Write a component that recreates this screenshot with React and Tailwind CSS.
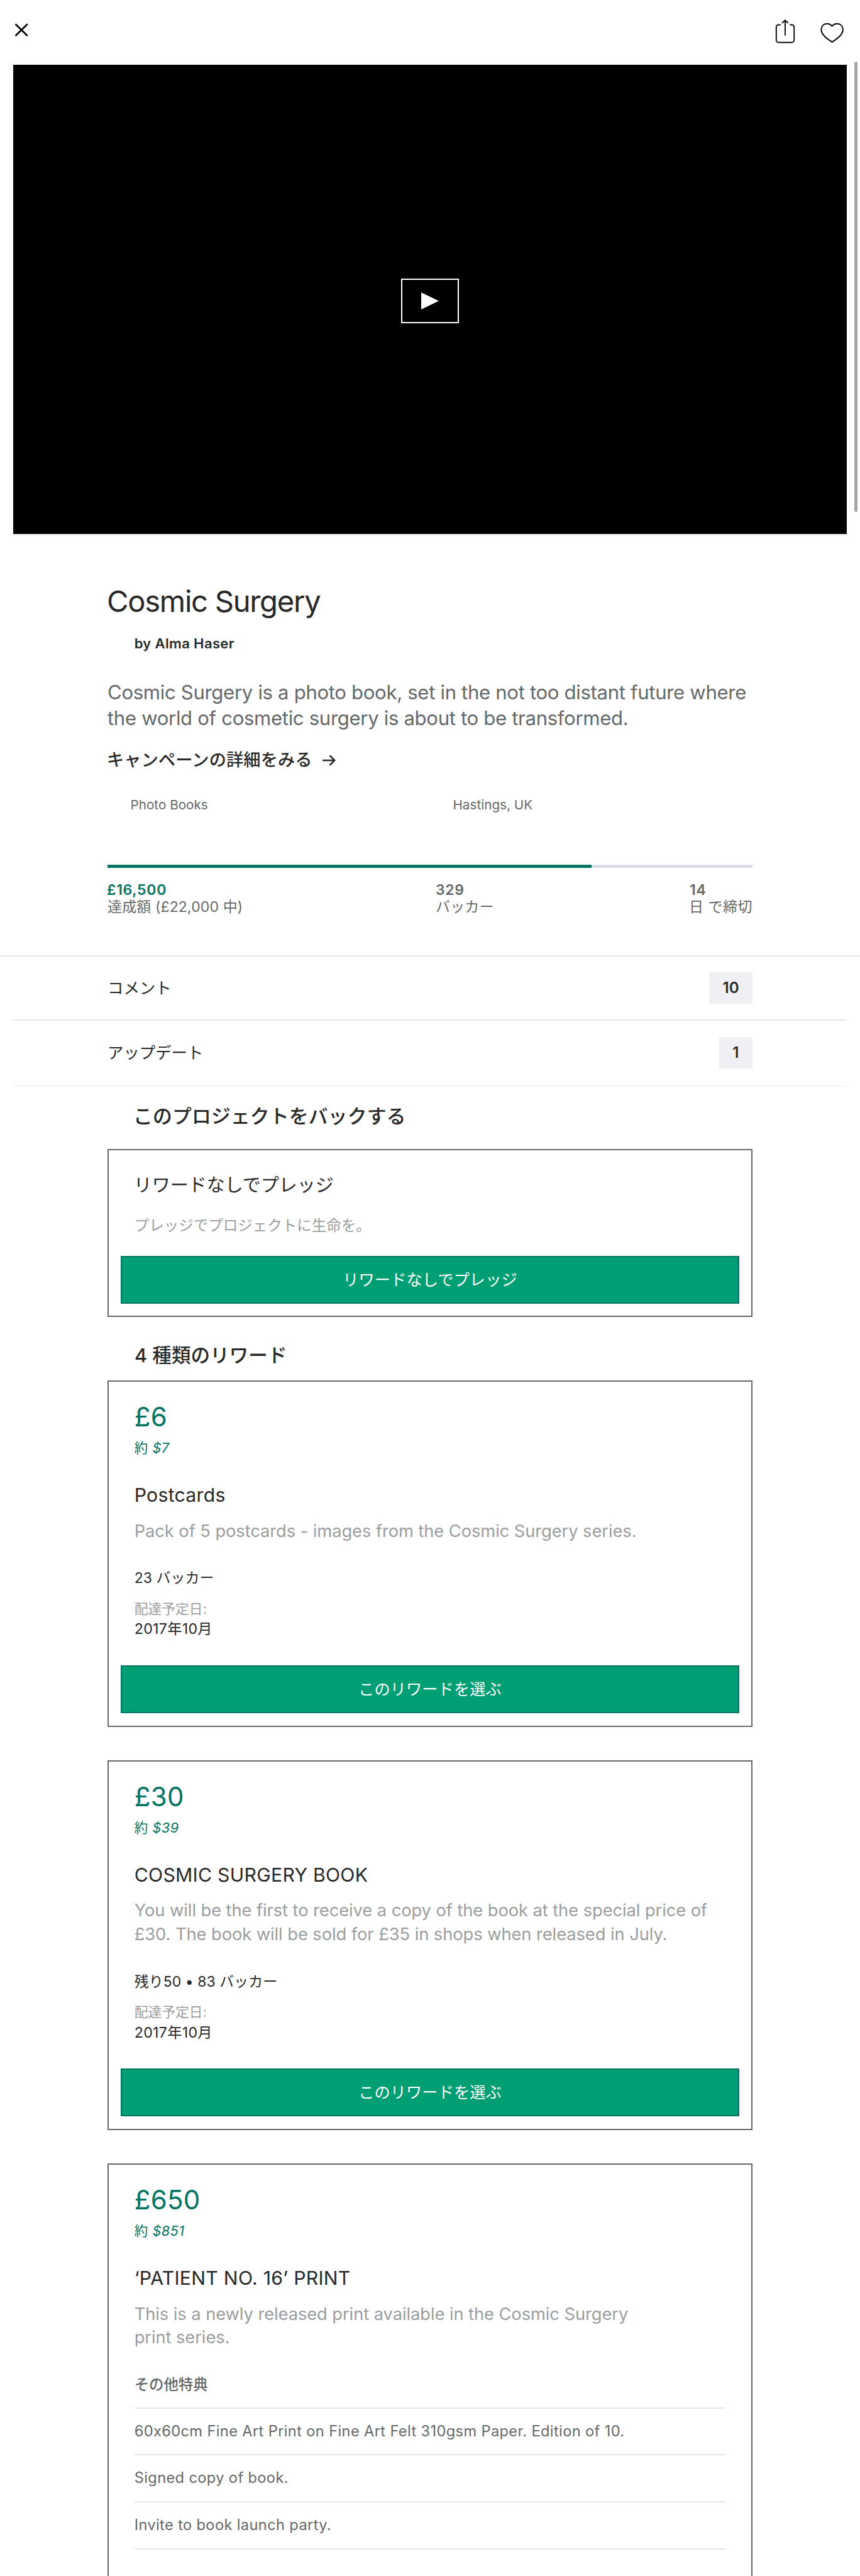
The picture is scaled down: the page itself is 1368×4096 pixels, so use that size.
const rewards = [
  {
    price: "£6",
    approx: "$7",
    title: "Postcards",
    body: ["Pack of 5 postcards - images from the Cosmic Surgery series."],
    backers: "23 バッカー",
    date: "2017年10月",
  },
  {
    price: "£30",
    approx: "$39",
    title: "COSMIC SURGERY BOOK",
    body: [
      "You will be the first to receive a copy of the book at the special price of",
      "£30. The book will be sold for £35 in shops when released in July.",
    ],
    backers: "残り50 • 83 バッカー",
    date: "2017年10月",
  },
  {
    price: "£650",
    approx: "$851",
    title: "‘PATIENT NO. 16’ PRINT",
    body: ["This is a newly released print available in the Cosmic Surgery", "print series."],
    perks: [
      "60x60cm Fine Art Print on Fine Art Felt 310gsm Paper. Edition of 10.",
      "Signed copy of book.",
      "Invite to book launch party.",
    ],
  },
];

function Header() {
  return (
    <header className="flex h-[103px] items-start justify-between pt-[31px] pr-[25px] pl-[23px]">
      <svg className="h-[39.2px] w-[23.2px]" viewBox="0 0 26 44" fill="none" stroke="#000" strokeWidth="3" strokeLinecap="round">
        <path d="M2.6 9l19.8 19.4M22.4 9L2.6 28.4" />
      </svg>
      <div className="flex gap-[39px]">
        <svg className="h-[39.2px] w-[32px]" viewBox="0 0 36 44" fill="none" stroke="#000" strokeWidth="2.1" strokeLinecap="round">
          <path d="M9 9.5H6a4 4 0 0 0-4 4V37a4 4 0 0 0 4 4h24a4 4 0 0 0 4-4V13.5a4 4 0 0 0-4-4h-3" />
          <path d="M17.9 28V2M13 5.8l4.9-4.4 4.9 4.4" />
        </svg>
        <svg className="h-[39.2px] w-[39.2px]" viewBox="0 0 44 44" fill="none" stroke="#000" strokeWidth="2.3" strokeLinejoin="round">
          <path d="M22 11.8C18.8 8.2 14.8 7.2 12 7.6 6.5 8.2 2.7 12.3 2.7 18.2 2.7 27 12 34 22 40.2 32 34 41.4 27 41.4 18.2 41.4 12.3 37.5 8.2 32 7.6 29.2 7.2 25.2 8.2 22 11.8Z" />
        </svg>
      </div>
    </header>
  );
}

function Video() {
  return (
    <div className="mx-[21.3px] flex h-[748px] items-center justify-center border-b-2 border-[#e6e6e6] bg-black pt-[4px]">
      <div className="flex h-[71px] w-[92px] items-center justify-center border-2 border-white">
        <svg className="h-[27px] w-[28px]" viewBox="0 0 28 27" fill="#fff">
          <path d="M0 0l28 13.5L0 27z" />
        </svg>
      </div>
    </div>
  );
}

function Summary() {
  return (
    <section className="mx-[171px] pt-[74.7px]">
      <h1 className="-ml-px text-[47.2px] leading-[60px] tracking-[-1.28px]">Cosmic Surgery</h1>
      <p className="mt-[22.5px] ml-[42.7px] text-[22px] leading-[30px] font-semibold tracking-[0.36px]">by Alma Haser</p>
      <p className="mt-[43.3px] text-[31.1px] leading-[41px] tracking-[-0.32px] whitespace-nowrap text-[#656969]">
        Cosmic Surgery is a photo book, set in the not too distant future where
        <br />
        the world of cosmetic surgery is about to be transformed.
      </p>
      <div className="mt-[25.1px] flex h-10 items-center text-[27.2px] leading-10 font-medium">
        <span className="-ml-px tracking-[0.15px]">キャンペーンの詳細をみる</span>
        <svg className="ml-[16px] h-[18px] w-[21px]" viewBox="0 0 21 18" fill="none" stroke="#282828" strokeWidth="2.6">
          <path d="M0 9h19M11.5 1.2L19.2 9l-7.7 7.8" />
        </svg>
      </div>
      <div className="mt-[36.1px] flex text-[20.7px] leading-[30px] text-[#656969]">
        <span className="w-[512px] pl-[36.5px]">Photo Books</span>
        <span className="pl-[37.5px]">Hastings, UK</span>
      </div>
      <div className="mt-[80.3px] h-[5.5px] bg-[#dadde6]">
        <div className="h-full w-3/4 bg-[#037362]" />
      </div>
      <dl className="mt-[21.6px] flex text-[23px] leading-[27px] tracking-[0.13px] text-[#656969]">
        <div className="w-[522px]">
          <dt className="-ml-px font-semibold tracking-[0.7px] text-[#037362]">£16,500</dt>
          <dd>達成額 (£22,000 中)</dd>
        </div>
        <div className="flex-1">
          <dt className="font-semibold tracking-[0.7px]">329</dt>
          <dd>バッカー</dd>
        </div>
        <div>
          <dt className="-ml-px font-semibold tracking-[0.7px]">14</dt>
          <dd className="-ml-0.5 tracking-[0.5px]">日 で締切</dd>
        </div>
      </dl>
    </section>
  );
}

function CountRow({ label, count }) {
  return (
    <div className="flex h-full items-center justify-between pr-[149.7px] pl-[149.7px]">
      <span className="text-[25.4px] leading-10">{label}</span>
      <span className="flex h-[50px] items-center bg-[#efeff4] px-[21.5px] text-[24px] leading-none font-semibold">{count}</span>
    </div>
  );
}

function GreenButton({ children }) {
  return (
    <button className="mx-[19px] flex h-[76.5px] items-center justify-center border-2 border-[#037362] bg-[#009e74] text-[25.3px] leading-none text-white">
      {children}
    </button>
  );
}

function Reward({ item }) {
  const open = Boolean(item.perks);
  return (
    <article className={open ? "flex h-[700px] flex-col border-2 border-b-0 border-[#656969] pt-[31px]" : "flex flex-col border-2 border-[#656969] pt-[31px] pb-[19.4px]"}>
      <div className="px-[40.7px]">
        <p className="text-[42px] leading-[50px] tracking-[0.3px] text-[#037362]">{item.price}</p>
        <p className="mt-[9px] text-[21.5px] leading-[30px] tracking-[0.6px] text-[#037362]">
          約 <i className="font-[450]">{item.approx}</i>
        </p>
        <h3 className="mt-10 text-[30.2px] leading-10 tracking-[0.28px]">{item.title}</h3>
        <div className="mt-[18.5px] text-[27.3px] leading-[37.4px] tracking-[-0.07px] whitespace-nowrap text-[#9b9e9e]">
          {item.body.map((line) => (
            <p key={line}>{line}</p>
          ))}
        </div>
        {open ? (
          <>
            <p className="mt-[41.5px] text-[23.4px] leading-[30px] font-medium text-[#656969]">その他特典</p>
            <ul className="mt-[20.6px] border-b-2 border-[#e6e6e6] text-[23.6px] text-[#656969]">
              {item.perks.map((perk) => (
                <li key={perk} className="h-[74.8px] border-t-2 border-[#e6e6e6] leading-[72.8px] tracking-[0.38px] whitespace-nowrap">
                  {perk}
                </li>
              ))}
            </ul>
          </>
        ) : (
          <>
            <p className="mt-[41.3px] text-[22.9px] leading-[30px] tracking-[0.1px]">{item.backers}</p>
            <p className="mt-[18.7px] text-[21.7px] leading-[30px] tracking-[0.1px] text-[#9b9e9e]">配達予定日:</p>
            <p className="mt-[2.4px] mb-[42.2px] text-[23.2px] leading-[30px] tracking-[0.3px]">{item.date}</p>
          </>
        )}
      </div>
      {!open && <GreenButton>このリワードを選ぶ</GreenButton>}
    </article>
  );
}

export default function App() {
  return (
    <div className="relative h-[4096px] w-[1368px] overflow-hidden bg-white font-['Inter','Noto_Sans_CJK_JP',sans-serif] text-[#282828] [font-feature-settings:'calt'_0]">
      <Header />
      <Video />
      <Summary />

      <section className="mt-[63.3px] border-t-2 border-[#e6e6e6]">
        <div className="mx-[21.3px] h-[101.5px] border-b-2 border-[#e6e6e6]">
          <CountRow label="コメント" count={10} />
        </div>
        <div className="mx-[21.3px] h-[105px] border-b-2 border-[#f5f5f5]">
          <CountRow label="アップデート" count={1} />
        </div>
      </section>

      <main className="mx-[171px] pt-[27px]">
        <h2 className="ml-[41px] text-[30.8px] leading-10 font-medium tracking-[0.18px]">このプロジェクトをバックする</h2>
        <article className="mt-[31.7px] flex flex-col border-2 border-[#656969] pt-[36.7px] pb-[19.2px]">
          <div className="px-[40.7px]">
            <h3 className="-ml-px text-[29px] leading-10">リワードなしでプレッジ</h3>
            <p className="mt-[29.2px] mb-[32.2px] text-[23.5px] leading-[30px] text-[#9b9e9e]">プレッジでプロジェクトに生命を。</p>
          </div>
          <GreenButton>リワードなしでプレッジ</GreenButton>
        </article>
        <h2 className="mt-[40.8px] ml-[43px] text-[30.5px] leading-10 font-medium tracking-[0.1px]">4 種類のリワード</h2>
        <div className="mt-[20.1px] flex flex-col gap-[53.4px]">
          {rewards.map((item) => (
            <Reward key={item.price} item={item} />
          ))}
        </div>
      </main>

      <div className="absolute top-[98px] left-[1358.5px] h-[716px] w-[5px] rounded-full bg-[#a6a6a6]" />
    </div>
  );
}
